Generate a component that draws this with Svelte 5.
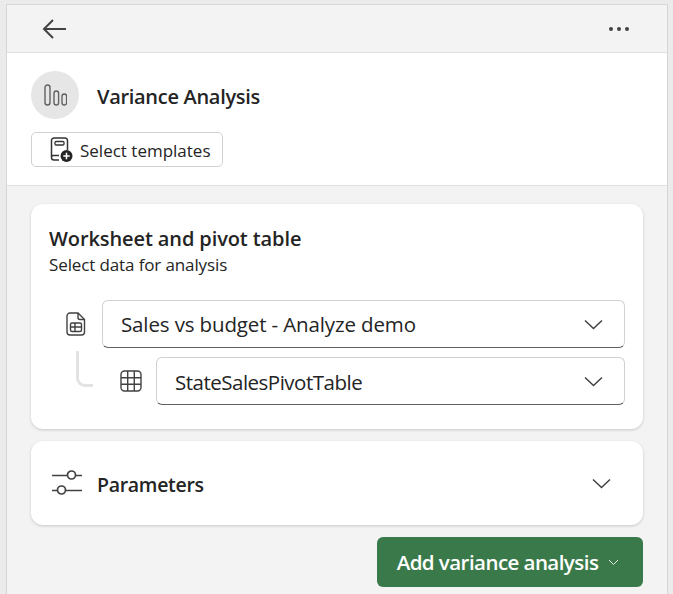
<script>
  const chevron = "M1 1.5 L9.5 9.5 L18 1.5";
</script>

<div class="frame">
  <div class="panel">
    <header class="topbar">
      <svg class="back" width="24" height="20" viewBox="0 0 24 20" fill="none" stroke="#424242" stroke-width="2">
        <path d="M11 1 L2 10 L11 19 M2 10 H24" />
      </svg>
      <div class="dots"><i></i><i></i><i></i></div>
    </header>

    <section class="hero">
      <div class="title-row">
        <div class="avatar">
          <svg width="24" height="22" viewBox="0 0 24 22" fill="none" stroke="#616161" stroke-width="1.4">
            <rect x="2" y="1" width="5" height="20" rx="2.5" />
            <rect x="11" y="7" width="4.6" height="14" rx="2.3" />
            <rect x="19" y="10" width="4.6" height="11" rx="2.3" />
          </svg>
        </div>
        <h1>Variance Analysis</h1>
      </div>
      <button class="templates">
        <svg width="24" height="26" viewBox="0 0 24 26" fill="none">
          <path d="M9 23 H4 A2.5 2.5 0 0 1 1.500 20.500 V3.500 A2.500 2.500 0 0 1 4 1 H15 A2.500 2.500 0 0 1 17.500 3.500 V13" stroke="#333" stroke-width="1.5" />
          <path d="M1.500 19.500 A2 2 0 0 1 3.500 18.500 H9" stroke="#333" stroke-width="1.300" />
          <rect x="5" y="4.500" width="9" height="3.500" rx="1" stroke="#333" stroke-width="1.300" />
          <circle cx="16.500" cy="19" r="6" fill="#242424" />
          <path d="M16.500 15.800 V22.200 M13.300 19 H19.700" stroke="#fff" stroke-width="1.500" />
        </svg>
        <span>Select templates</span>
      </button>
    </section>

    <main class="content">
      <div class="card data">
        <h2>Worksheet and pivot table</h2>
        <p>Select data for analysis</p>
        <div class="rows">
          <div class="row first">
            <svg class="ico" width="20" height="24" viewBox="0 0 20 24" fill="none" stroke="#424242" stroke-width="1.400">
              <path d="M4 1 H12 L18.500 7.500 V20 A3 3 0 0 1 15.500 23 H4 A3 3 0 0 1 1 20 V4 A3 3 0 0 1 4 1 Z" />
              <path d="M12 1 V5.500 A2 2 0 0 0 14 7.500 H18.500" />
              <rect x="4.500" y="11" width="11" height="8.500" rx="1.500" />
              <path d="M4.500 15 H15.500 M9 11 V19.500" />
            </svg>
            <button class="select"><span>Sales vs budget - Analyze demo</span>
              <svg width="19" height="11" viewBox="0 0 19 11" fill="none" stroke="#424242" stroke-width="1.500"><path d={chevron} /></svg>
            </button>
          </div>
          <div class="row second">
            <div class="elbow"></div>
            <svg class="ico grid" width="22" height="22" viewBox="0 0 22 22" fill="none" stroke="#424242" stroke-width="1.400">
              <rect x="1" y="1" width="20" height="20" rx="3.500" />
              <path d="M7.700 1 V21 M14.300 1 V21 M1 7.700 H21 M1 14.300 H21" />
            </svg>
            <button class="select"><span>StateSalesPivotTable</span>
              <svg width="19" height="11" viewBox="0 0 19 11" fill="none" stroke="#424242" stroke-width="1.500"><path d={chevron} /></svg>
            </button>
          </div>
        </div>
      </div>

      <div class="card params">
        <svg width="32" height="26" viewBox="0 0 32 26" fill="none" stroke="#424242" stroke-width="1.700">
          <path d="M1 5.500 H16 M25 5.500 H31 M1 20.500 H6 M15 20.500 H31" />
          <circle cx="20.500" cy="5" r="4" />
          <circle cx="10.500" cy="20" r="4" />
        </svg>
        <strong>Parameters</strong>
        <svg class="pchev" width="19" height="11" viewBox="0 0 19 11" fill="none" stroke="#424242" stroke-width="1.500"><path d={chevron} /></svg>
      </div>

      <div class="actions">
        <button class="add">
          <span>Add variance analysis</span>
          <svg width="11" height="7" viewBox="0 0 11 7" fill="none" stroke="#e4eee7" stroke-width="1"><path d="M1 1 L5.500 5.500 L10 1" /></svg>
        </button>
      </div>
    </main>
  </div>
</div>

<style>
  :global(body) {
    margin: 0;
    background: #ebebeb;
    overflow: hidden;
  }
  .frame {
    height: 594px;
    padding: 4px 5px 0 6px;
    box-sizing: border-box;
    font-family: "Open Sans", "Noto Sans", sans-serif;
    color: #242424;
  }
  .panel {
    height: 100%;
    box-sizing: border-box;
    border: 1px solid #d6d6d6;
    border-bottom: 0;
    background: #f3f3f3;
    display: flex;
    flex-direction: column;
  }
  .topbar {
    flex: none;
    display: flex;
    align-items: center;
    justify-content: space-between;
    padding: 0 37px 0 35px;
    box-sizing: border-box;
    border-bottom: 1px solid #e0e0e0;
    height: 48px;
  }
  .dots {
    display: flex;
    gap: 4px;
    margin-right: 1px;
  }
  .dots i {
    width: 4px;
    height: 4px;
    border-radius: 50%;
    background: #424242;
  }
  .hero {
    background: #fff;
    height: 133px;
    flex: none;
    box-sizing: border-box;
    border-bottom: 1px solid #e0e0e0;
    padding: 18px 24px 0;
  }
  .title-row {
    display: flex;
    align-items: center;
    gap: 18px;
  }
  .avatar {
    width: 48px;
    height: 48px;
    border-radius: 50%;
    background: #e6e6e6;
    display: flex;
    align-items: center;
    justify-content: center;
  }
  h1 {
    margin: 2px 0 0;
    font-size: 20px;
    font-weight: 600;
    letter-spacing: -0.3px;
  }
  .templates {
    margin-top: 13px;
    width: 192px;
    height: 35px;
    display: flex;
    align-items: center;
    gap: 6px;
    padding: 0 0 0 18px;
    box-sizing: border-box;
    background: #fff;
    border: 1px solid #d1d1d1;
    border-radius: 5px;
    font: inherit;
    font-size: 17px;
    letter-spacing: 0;
    color: #242424;
  }
  .templates span { margin-top: 1px; }
  .content {
    padding: 18px 24px 0;
    display: flex;
    flex-direction: column;
  }
  .card {
    background: #fff;
    border-radius: 12px;
    box-shadow: 0 1px 3px rgba(0, 0, 0, 0.18);
  }
  .data {
    height: 225px;
    box-sizing: border-box;
    padding: 22px 18px 0;
  }
  h2 {
    margin: 0;
    font-size: 20px;
    line-height: 26px;
    font-weight: 600;
    letter-spacing: -0.1px;
  }
  .data p {
    margin: 3px 0 0;
    font-size: 17px;
    line-height: 20px;
    letter-spacing: -0.12px;
  }
  .rows {
    margin-top: 25px;
    display: flex;
    flex-direction: column;
    gap: 9px;
  }
  .row {
    display: flex;
    align-items: center;
    position: relative;
  }
  .ico { flex: none; }
  .first .ico { margin: 0 16px 0 17px; }
  .second { padding-left: 71px; }
  .grid { margin-right: 14px; }
  .elbow {
    position: absolute;
    left: 27px;
    top: -6px;
    width: 17px;
    height: 36px;
    box-sizing: border-box;
    border-left: 3px solid #e3e3e3;
    border-bottom: 3px solid #e3e3e3;
    border-bottom-left-radius: 9px;
  }
  .select {
    flex: 1;
    height: 48px;
    display: flex;
    align-items: center;
    justify-content: space-between;
    padding: 0 21px 0 18px;
    box-sizing: border-box;
    background: #fff;
    border: 1px solid #d1d1d1;
    border-bottom-color: #616161;
    border-radius: 6px;
    font: inherit;
    font-size: 20.500px;
    letter-spacing: -0.13px;
    color: #242424;
    text-align: left;
  }
  .second .select {
    letter-spacing: -0.5px;
  }
  .second .select span { margin-top: 1px; }
  .params {
    margin-top: 12px;
    height: 84px;
    display: flex;
    align-items: center;
    padding: 0 32px 0 20px;
    box-sizing: border-box;
  }
  .params strong {
    margin: 2px 0 0 14px;
    font-size: 19.500px;
    font-weight: 600;
    letter-spacing: -0.3px;
  }
  .pchev { margin-left: auto; }
  .actions {
    margin-top: 12px;
    display: flex;
    justify-content: flex-end;
  }
  .add {
    width: 266px;
    height: 50px;
    display: flex;
    align-items: center;
    justify-content: center;
    gap: 10px;
    background: #3a7a4a;
    color: #fff;
    border: 0;
    border-radius: 6px;
    font: inherit;
    font-size: 20.500px;
    font-weight: 600;
    letter-spacing: -0.55px;
    padding: 0 4px 0 0;
  }
</style>
